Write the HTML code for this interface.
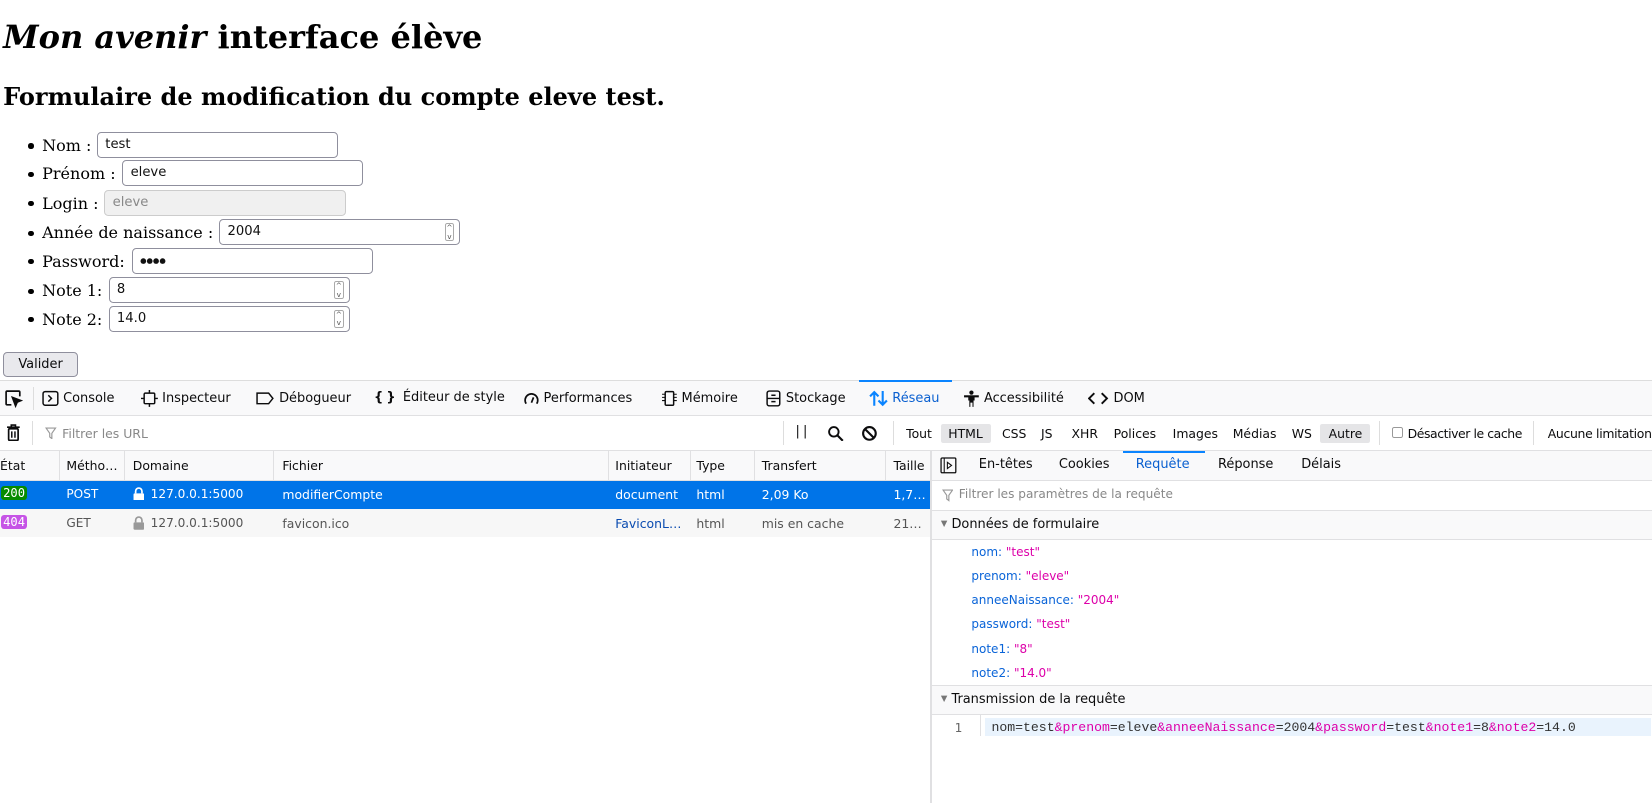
<!DOCTYPE html>
<html><head><meta charset="utf-8">
<style>
*{box-sizing:border-box;margin:0;padding:0}
body{width:1652px;height:762px;overflow:hidden;background:#fff;margin:0}
#w{position:relative;width:1568px;height:723px;zoom:1.0536;font-family:"DejaVu Serif","Liberation Serif",serif;color:#000}
.a{position:absolute;white-space:nowrap}
h1{position:absolute;left:3px;top:17px;font-size:30.4px;font-weight:bold;white-space:nowrap}
h2{position:absolute;left:3px;top:78px;font-size:22.8px;font-weight:bold;white-space:nowrap}
.li{position:absolute;left:27px;font-size:15.2px;height:24px;line-height:24px;white-space:nowrap}
.li:before{content:"";position:absolute;left:0;top:10px;width:5px;height:5px;border-radius:50%;background:#000}
.li span{position:absolute;left:13px;white-space:nowrap}
.inp{position:absolute;height:25px;width:229px;border:1px solid #8f8f9d;border-radius:4px;background:#fff;font:12.5px "DejaVu Sans","Liberation Sans",sans-serif;line-height:23px;padding-left:7px;color:#111}
.sp{position:absolute;right:5px;top:3px;width:9px;height:17px;border:1px solid #aaa;border-radius:2px;font-size:7px;line-height:8px;text-align:center;color:#555}
.ui{font-family:"DejaVu Sans","Liberation Sans",sans-serif;font-size:12.3px;color:#0c0c0d}
.fb{font-size:11.8px}
.bar{position:absolute;left:0;width:1568px}
.ic{display:inline-block;vertical-align:middle}
</style></head><body><div id="w">
<h1><i>Mon avenir</i> interface élève</h1>
<h2>Formulaire de modification du compte eleve test.</h2>

<div class="li" style="top:126px"><span>Nom :</span></div>
<div class="inp" style="left:92px;top:125px">test</div>
<div class="li" style="top:153px"><span>Prénom :</span></div>
<div class="inp" style="left:116px;top:152px">eleve</div>
<div class="li" style="top:181px"><span>Login :</span></div>
<div class="inp" style="left:99px;top:180px;background:#f0f0f0;border-color:#ccc;color:#888">eleve</div>
<div class="li" style="top:209px"><span>Année de naissance :</span></div>
<div class="inp" style="left:208px;top:208px">2004<div class="sp">^<br>v</div></div>
<div class="li" style="top:236px"><span>Password:</span></div>
<div class="inp" style="left:125px;top:235px;font-size:7px;letter-spacing:0px">●●●●</div>
<div class="li" style="top:264px"><span>Note 1:</span></div>
<div class="inp" style="left:103px;top:263px">8<div class="sp">^<br>v</div></div>
<div class="li" style="top:291px"><span>Note 2:</span></div>
<div class="inp" style="left:103px;top:290px">14.0<div class="sp">^<br>v</div></div>

<div class="a ui" style="left:3px;top:334px;width:71px;height:24px;border:1px solid #8f8f9d;border-radius:4px;background:#e9e9ed;text-align:center;line-height:22px">Valider</div>

<!-- toolbar -->
<div class="bar ui" style="top:361px;height:34px;background:#f9f9fa;border-top:1px solid #ddd;border-bottom:1px solid #e0e0e2"></div>
<div class="a" style="left:815px;top:361px;width:89px;height:2px;background:#0a84ff"></div>
<div class="a" style="left:31px;top:367px;width:1px;height:22px;background:#ddd"></div>
<svg class="a" style="left:4px;top:369px" width="18" height="18" viewBox="0 0 18 18" fill="none" stroke="#0c0c0d" stroke-width="1.6"><path d="M7 15H3a1 1 0 0 1-1-1V3a1 1 0 0 1 1-1h11a1 1 0 0 1 1 1v4"/><path d="M8 8l8 3-3.5 1.5L11 16z" fill="#0c0c0d"/></svg>
<div class="a ui" style="top:370px;left:40px;line-height:16px">
<svg class="ic" width="16" height="16"><rect x="1" y="1.5" width="14" height="13" rx="2" fill="none" stroke="#0c0c0d" stroke-width="1.4"/><path d="M6 5l3 3-3 3" fill="none" stroke="#0c0c0d" stroke-width="1.4"/></svg> Console</div>
<div class="a ui" style="top:370px;left:134px;line-height:16px"><svg class="ic" width="16" height="16"><rect x="3" y="3" width="10" height="10" rx="1" fill="none" stroke="#0c0c0d" stroke-width="1.4"/><path d="M8 0v3M8 13v3M0 8h3M13 8h3" stroke="#0c0c0d" stroke-width="1.4"/></svg> Inspecteur</div>
<div class="a ui" style="top:370px;left:243px;line-height:16px"><svg class="ic" width="18" height="16"><path d="M1 3h11l4 5-4 5H1z" fill="none" stroke="#0c0c0d" stroke-width="1.4"/></svg> Débogueur</div>
<div class="a ui" style="top:370px;left:355px;line-height:16px"><b style="font-weight:bold;letter-spacing:3px">{}</b> Éditeur de style</div>
<div class="a ui" style="top:370px;left:496px;line-height:16px"><svg class="ic" width="16" height="16"><path d="M3 13a6 6 0 1 1 10 0" fill="none" stroke="#0c0c0d" stroke-width="1.6"/><path d="M8 12l2-5" stroke="#0c0c0d" stroke-width="1.6"/></svg> Performances</div>
<div class="a ui" style="top:370px;left:627px;line-height:16px"><svg class="ic" width="16" height="16"><rect x="4" y="1.5" width="8" height="13" rx="1" fill="none" stroke="#0c0c0d" stroke-width="1.4"/><path d="M1 4h3M1 7h3M1 10h3M12 4h3M12 7h3M12 10h3" stroke="#0c0c0d"/></svg> Mémoire</div>
<div class="a ui" style="top:370px;left:726px;line-height:16px"><svg class="ic" width="16" height="16"><rect x="2" y="1" width="12" height="14" rx="2" fill="none" stroke="#0c0c0d" stroke-width="1.4"/><path d="M2 8h12M6 5h4M6 11h4" stroke="#0c0c0d" stroke-width="1.4"/></svg> Stockage</div>
<div class="a ui" style="top:370px;left:825px;line-height:16px;color:#0a60d0"><svg class="ic" width="18" height="16"><path d="M5 15V2M1 6l4-4 4 4M13 1v13M9 10l4 4 4-4" fill="none" stroke="#0a84ff" stroke-width="2"/></svg> Réseau</div>
<div class="a ui" style="top:370px;left:914px;line-height:16px"><svg class="ic" width="16" height="16"><circle cx="8" cy="2.5" r="2" fill="#0c0c0d"/><path d="M1 6h14" stroke="#0c0c0d" stroke-width="2"/><path d="M5 6h6v4h-1v6H9v-4H7v4H6v-6H5z" fill="#0c0c0d"/></svg> Accessibilité</div>
<div class="a ui" style="top:370px;left:1033px;line-height:16px"><svg class="ic" width="20" height="16"><path d="M6 3L1 8l5 5M13 3l5 5-5 5" fill="none" stroke="#0c0c0d" stroke-width="1.8"/></svg> DOM</div>

<!-- filter bar -->
<div class="bar" style="top:395px;height:33px;background:#fff;border-bottom:1px solid #e0e0e2"></div>
<svg class="a" style="left:6px;top:402px" width="14" height="17"><path d="M1 3h12M5 3V1h4v2" fill="none" stroke="#0c0c0d" stroke-width="1.5"/><rect x="2.5" y="4.5" width="9" height="11" rx="1" fill="none" stroke="#0c0c0d" stroke-width="1.6"/><path d="M5.5 7v6M8.5 7v6" stroke="#0c0c0d" stroke-width="1.4"/></svg>
<div class="a" style="left:30px;top:400px;width:1px;height:22px;background:#ddd"></div>
<svg class="a" style="left:43px;top:405px" width="11" height="12"><path d="M1 1h9L6.5 6v5l-2-1.5V6z" fill="none" stroke="#999" stroke-width="1.1"/></svg>
<div class="a ui fb" style="left:59px;top:404px;color:#888">Filtrer les URL</div>
<div class="a" style="left:743px;top:400px;width:1px;height:22px;background:#ddd"></div>
<div class="a ui" style="left:755px;top:402px;letter-spacing:3px">||</div>
<svg class="a" style="left:785px;top:403px" width="16" height="16"><circle cx="6.5" cy="6.5" r="4.5" fill="none" stroke="#0c0c0d" stroke-width="1.8"/><path d="M10 10l5 5" stroke="#0c0c0d" stroke-width="2"/></svg>
<svg class="a" style="left:817px;top:403px" width="16" height="16"><circle cx="8" cy="8" r="6" fill="none" stroke="#0c0c0d" stroke-width="2"/><path d="M4 4l8 8" stroke="#0c0c0d" stroke-width="2"/></svg>
<div class="a" style="left:848px;top:400px;width:1px;height:22px;background:#ddd"></div>
<div class="a" style="left:893px;top:402px;width:48px;height:18px;background:#e5e5e7;border-radius:2px"></div>
<div class="a" style="left:1253px;top:402px;width:47px;height:18px;background:#e5e5e7;border-radius:2px"></div>
<div class="a ui fb" style="left:860px;top:404px">Tout</div>
<div class="a ui fb" style="left:900px;top:404px">HTML</div>
<div class="a ui fb" style="left:951px;top:404px">CSS</div>
<div class="a ui fb" style="left:988px;top:404px">JS</div>
<div class="a ui fb" style="left:1017px;top:404px">XHR</div>
<div class="a ui fb" style="left:1057px;top:404px">Polices</div>
<div class="a ui fb" style="left:1113px;top:404px">Images</div>
<div class="a ui fb" style="left:1170px;top:404px">Médias</div>
<div class="a ui fb" style="left:1226px;top:404px">WS</div>
<div class="a ui fb" style="left:1261px;top:404px">Autre</div>
<div class="a" style="left:1309px;top:400px;width:1px;height:22px;background:#ddd"></div>
<div class="a" style="left:1321px;top:405px;width:11px;height:11px;border:1px solid #999;border-radius:2px"></div>
<div class="a ui fb" style="left:1336px;top:404px;letter-spacing:-0.4px">Désactiver le cache</div>
<div class="a" style="left:1455px;top:400px;width:1px;height:22px;background:#ddd"></div>
<div class="a ui fb" style="left:1469px;top:404px;letter-spacing:-0.3px">Aucune limitation</div>

<!-- table header -->
<div class="a" style="left:0;top:428px;width:884px;height:29px;background:#f9f9fa;border-bottom:1px solid #e0e0e2"></div>
<div class="a ui fb" style="left:0;top:435px">État</div>
<div class="a ui fb" style="left:63px;top:435px">Métho…</div>
<div class="a ui fb" style="left:126px;top:435px">Domaine</div>
<div class="a ui fb" style="left:268px;top:435px">Fichier</div>
<div class="a ui fb" style="left:584px;top:435px">Initiateur</div>
<div class="a ui fb" style="left:661px;top:435px">Type</div>
<div class="a ui fb" style="left:723px;top:435px">Transfert</div>
<div class="a ui fb" style="left:848px;top:435px">Taille</div>
<div class="a" style="left:56px;top:428px;width:1px;height:82px;background:#e0e0e2"></div>
<div class="a" style="left:118px;top:428px;width:1px;height:82px;background:#e0e0e2"></div>
<div class="a" style="left:259px;top:428px;width:1px;height:82px;background:#e0e0e2"></div>
<div class="a" style="left:577px;top:428px;width:1px;height:82px;background:#e0e0e2"></div>
<div class="a" style="left:655px;top:428px;width:1px;height:82px;background:#e0e0e2"></div>
<div class="a" style="left:716px;top:428px;width:1px;height:82px;background:#e0e0e2"></div>
<div class="a" style="left:840px;top:428px;width:1px;height:82px;background:#e0e0e2"></div>
<!-- rows -->
<div class="a" style="left:0;top:457px;width:884px;height:26px;background:#0074e8"></div>
<div class="a" style="left:0;top:483px;width:884px;height:27px;background:#f7f7f7"></div>
<div class="a ui" style="left:1px;top:461px;background:#058b00;color:#fff;padding:0 2px;border-radius:3px;font-family:'DejaVu Sans Mono',monospace;font-size:11.5px">200</div>
<div class="a ui" style="left:63px;top:462px;color:#fff;font-size:11.5px">POST</div>
<svg class="a" style="left:126px;top:462px" width="11" height="13"><path d="M2.5 6V4a3 3 0 0 1 6 0v2" fill="none" stroke="#fff" stroke-width="1.6"/><rect x="0.5" y="6" width="10" height="7" rx="1" fill="#fff"/></svg>
<div class="a ui" style="left:143px;top:462px;color:#fff;font-size:11.5px">127.0.0.1:5000</div>
<div class="a ui" style="left:268px;top:462px;color:#fff;font-size:11.8px">modifierCompte</div>
<div class="a ui" style="left:584px;top:462px;color:#fff;font-size:11.8px">document</div>
<div class="a ui" style="left:661px;top:462px;color:#fff;font-size:11.8px">html</div>
<div class="a ui" style="left:723px;top:462px;color:#fff;font-size:11.8px">2,09 Ko</div>
<div class="a ui" style="left:848px;top:462px;color:#fff;font-size:11.8px">1,7…</div>
<div class="a ui" style="left:1px;top:489px;background:#c654e6;color:#fff;padding:0 2px;border-radius:3px;font-family:'DejaVu Sans Mono',monospace;font-size:11.5px">404</div>
<div class="a ui" style="left:63px;top:490px;color:#555;font-size:11.5px">GET</div>
<svg class="a" style="left:126px;top:490px" width="11" height="13"><path d="M2.5 6V4a3 3 0 0 1 6 0v2" fill="none" stroke="#999" stroke-width="1.6"/><rect x="0.5" y="6" width="10" height="7" rx="1" fill="#999"/></svg>
<div class="a ui" style="left:143px;top:490px;color:#555;font-size:11.5px">127.0.0.1:5000</div>
<div class="a ui" style="left:268px;top:490px;color:#555;font-size:11.8px">favicon.ico</div>
<div class="a ui" style="left:584px;top:490px;color:#0a4bb0;font-size:11.8px">FaviconL…</div>
<div class="a ui" style="left:661px;top:490px;color:#555;font-size:11.8px">html</div>
<div class="a ui" style="left:723px;top:490px;color:#555;font-size:11.8px">mis en cache</div>
<div class="a ui" style="left:848px;top:490px;color:#555;font-size:11.8px">21…</div>

<!-- right panel -->
<div class="a" style="left:883px;top:428px;width:2px;height:334px;background:#e0e0e2"></div>
<div class="a" style="left:885px;top:428px;width:767px;height:29px;background:#f9f9fa;border-bottom:1px solid #e0e0e2"></div>
<svg class="a" style="left:892px;top:434px" width="16" height="16"><rect x="1" y="1" width="14" height="14" rx="1" fill="none" stroke="#0c0c0d" stroke-width="1.2"/><path d="M4 1v14" stroke="#0c0c0d"/><path d="M7 5l4 3-4 3z" fill="none" stroke="#0c0c0d"/></svg>
<div class="a ui" style="left:929px;top:434px">En-têtes</div>
<div class="a ui" style="left:1005px;top:434px">Cookies</div>
<div class="a" style="left:1066px;top:428px;width:78px;height:2px;background:#0a84ff"></div>
<div class="a ui" style="left:1078px;top:434px;color:#0a60d0">Requête</div>
<div class="a ui" style="left:1156px;top:434px">Réponse</div>
<div class="a ui" style="left:1235px;top:434px">Délais</div>
<svg class="a" style="left:894px;top:464px" width="11" height="12"><path d="M1 1h9L6.5 6v5l-2-1.5V6z" fill="none" stroke="#999" stroke-width="1.1"/></svg>
<div class="a ui" style="left:910px;top:462px;color:#888;font-size:11.5px">Filtrer les paramètres de la requête</div>
<div class="a" style="left:885px;top:484px;width:767px;height:29px;background:#f9f9fa;border-top:1px solid #e0e0e2;border-bottom:1px solid #e0e0e2"></div>
<div class="a ui" style="left:893px;top:491px"><span style="font-size:8px;color:#777;vertical-align:2px">▼</span> Données de formulaire</div>
<div class="a ui" style="left:922px;top:517px;font-size:11.4px;color:#0a64d8">nom: <span style="color:#dd00a9">"test"</span></div>
<div class="a ui" style="left:922px;top:540px;font-size:11.4px;color:#0a64d8">prenom: <span style="color:#dd00a9">"eleve"</span></div>
<div class="a ui" style="left:922px;top:563px;font-size:11.4px;color:#0a64d8">anneeNaissance: <span style="color:#dd00a9">"2004"</span></div>
<div class="a ui" style="left:922px;top:586px;font-size:11.4px;color:#0a64d8">password: <span style="color:#dd00a9">"test"</span></div>
<div class="a ui" style="left:922px;top:609px;font-size:11.4px;color:#0a64d8">note1: <span style="color:#dd00a9">"8"</span></div>
<div class="a ui" style="left:922px;top:632px;font-size:11.4px;color:#0a64d8">note2: <span style="color:#dd00a9">"14.0"</span></div>
<div class="a" style="left:885px;top:650px;width:767px;height:29px;background:#f9f9fa;border-top:1px solid #e0e0e2;border-bottom:1px solid #e0e0e2"></div>
<div class="a ui" style="left:893px;top:657px"><span style="font-size:8px;color:#777;vertical-align:2px">▼</span> Transmission de la requête</div>
<div class="a" style="left:930px;top:679px;width:1px;height:20px;background:#e0e0e2"></div>
<div class="a ui" style="left:906px;top:683px;font-family:'DejaVu Sans Mono',monospace;font-size:12px;color:#666">1</div>
<div class="a" style="left:935px;top:681px;width:632px;height:18px;background:#e9f3fd"></div>
<div class="a" style="left:941px;top:683px;font-family:'Liberation Mono','DejaVu Sans Mono',monospace;font-size:12.5px;color:#333">nom=test<span style="color:#dd00a9">&amp;prenom</span>=eleve<span style="color:#dd00a9">&amp;anneeNaissance</span>=2004<span style="color:#dd00a9">&amp;password</span>=test<span style="color:#dd00a9">&amp;note1</span>=8<span style="color:#dd00a9">&amp;note2</span>=14.0</div>
</div></body></html>
